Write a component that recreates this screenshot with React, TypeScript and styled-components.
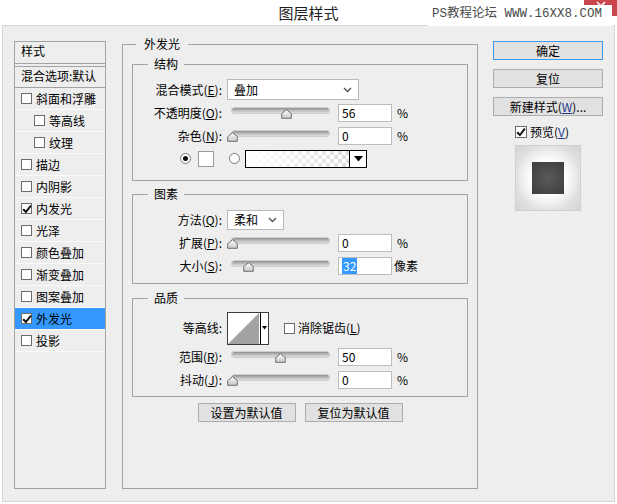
import React from 'react';
import styled, { createGlobalStyle } from 'styled-components';

const GlobalStyle = createGlobalStyle`
  html, body {
    margin: 0;
    padding: 0;
    background: #fff;
  }
  body {
    font-family: "Noto Sans CJK SC", "Microsoft YaHei", sans-serif;
    font-size: 12px;
    color: #000;
  }
  * {
    box-sizing: border-box;
  }
`;

type LayerItem = {
  label: string;
  checked?: boolean;
  indent?: boolean;
  selected?: boolean;
};

const layerStyles: LayerItem[] = [
  { label: '斜面和浮雕' },
  { label: '等高线', indent: true },
  { label: '纹理', indent: true },
  { label: '描边' },
  { label: '内阴影' },
  { label: '内发光', checked: true },
  { label: '光泽' },
  { label: '颜色叠加' },
  { label: '渐变叠加' },
  { label: '图案叠加' },
  { label: '外发光', checked: true, selected: true },
  { label: '投影' },
];

const Window = styled.div`
  position: relative;
  width: 617px;
  height: 504px;
  background: #fff;
  display: flex;
  flex-direction: column;
  overflow: hidden;
`;

const TitleBar = styled.div`
  height: 25px;
  flex-shrink: 0;
  display: flex;
  align-items: center;
  justify-content: center;
  font-size: 15px;
  line-height: 25px;
  color: #1e1e1e;
`;

const CloseButton = styled.div`
  position: absolute;
  top: 0;
  right: 0;
  width: 33px;
  height: 16px;
  background: #c9474c;
  display: flex;
  justify-content: center;
  padding-top: 1px;
`;

const Watermark = styled.div`
  position: absolute;
  top: 5px;
  left: 428px;
  width: 184px;
  height: 21px;
  background: #fff;
  padding-left: 4px;
  font-family: "Liberation Mono", "Noto Sans CJK SC", monospace;
  font-size: 12.5px;
  line-height: 19px;
  color: #4a4a4a;
  white-space: nowrap;
`;

const Body = styled.div`
  flex: 1;
  margin: 0 2px 2px 2px;
  border: 1px solid #d6d6d6;
  background: #eeeeee;
  display: flex;
  align-items: flex-start;
  padding: 11px 0 0 11px;
`;

/* left: list of effects */

const StyleList = styled.div`
  flex-shrink: 0;
  width: 92px;
  height: 448px;
  margin-top: 4px;
  border: 1px solid #a3a3a3;
`;

const ListHeader = styled.div`
  height: 22px;
  padding: 1px 0 0 6px;
  line-height: 16px;
  border-bottom: 1px solid #a3a3a3;
  margin-bottom: 2px;
`;

const BlendRow = styled.div`
  height: 22px;
  padding-left: 6px;
  line-height: 18px;
  border-top: 1px solid #a3a3a3;
  border-bottom: 1px solid #a3a3a3;
  white-space: nowrap;
  overflow: hidden;
`;

const ListRow = styled.div<{ $indent?: boolean; $selected?: boolean }>`
  height: 22px;
  display: flex;
  align-items: center;
  padding-left: ${({ $indent }) => ($indent ? '19px' : '6px')};
  background: ${({ $selected }) => ($selected ? '#3399ff' : 'transparent')};
  border-bottom: 1px solid #fafafa;
  white-space: nowrap;
`;

const RowText = styled.span`
  margin-left: 4px;
  line-height: 16px;
`;

const Box = styled.span<{ $size?: number }>`
  display: inline-flex;
  align-items: center;
  justify-content: center;
  flex-shrink: 0;
  width: ${({ $size }) => $size ?? 11}px;
  height: ${({ $size }) => $size ?? 11}px;
  border: 1px solid #6b6b6b;
  background: #fff;
  overflow: visible;
`;

const Checkbox: React.FC<{ checked?: boolean; size?: number }> = ({ checked, size }) => (
  <Box $size={size}>
    {checked && (
      <svg width="10" height="10" viewBox="0 0 10 10" style={{ overflow: 'visible' }}>
        <path d="M1.2 5.2 L3.9 8 L8.9 1.6" stroke="#111" strokeWidth="2" fill="none" />
      </svg>
    )}
  </Box>
);

/* center: outer glow group */

const MainGroup = styled.fieldset`
  flex-shrink: 0;
  width: 356px;
  height: 452px;
  margin: 0 0 0 16px;
  padding: 6px 9px 0;
  border: 1px solid #a3a3a3;
  min-inline-size: 0;
`;

const MainLegend = styled.legend`
  margin-left: 4px;
  padding: 0 8px;
  line-height: 14px;
  font-size: 12px;
`;

const SubGroup = styled.fieldset<{ $mt: number; $pt: number; $pb: number }>`
  margin: ${({ $mt }) => $mt}px 0 0;
  padding: ${({ $pt }) => $pt}px 0 ${({ $pb }) => $pb}px;
  border: 1px solid #a3a3a3;
  min-inline-size: 0;
`;

const SubLegend = styled.legend`
  margin-left: 15px;
  padding: 0 6px;
  line-height: 14px;
  font-size: 12px;
`;

const Row = styled.div<{ $h?: number }>`
  display: flex;
  align-items: center;
  height: ${({ $h }) => $h ?? 23}px;
`;

const Label = styled.div`
  width: 89px;
  margin-right: 5px;
  text-align: right;
  white-space: nowrap;
  line-height: 16px;
`;

const Mn = styled.u<{ $blue?: boolean }>`
  text-decoration: underline;
  text-underline-offset: 1px;
  color: ${({ $blue }) => ($blue ? '#23378f' : 'inherit')};
`;

const Select = styled.div<{ $w: number; $h: number }>`
  width: ${({ $w }) => $w}px;
  height: ${({ $h }) => $h}px;
  border: 1px solid #b9b9b9;
  background: #fff;
  display: flex;
  align-items: center;
  justify-content: space-between;
  padding: 0 6px 0 6px;
  line-height: 16px;
`;

const Chevron = () => (
  <svg width="9" height="6" viewBox="0 0 9 6">
    <path d="M1 1 L4.5 4.5 L8 1" stroke="#555" strokeWidth="1.4" fill="none" />
  </svg>
);

const SliderBox = styled.div`
  position: relative;
  width: 107px;
  height: 11px;
  margin-top: 1px;
`;

const Track = styled.div`
  margin-left: 5px;
  width: 97px;
  height: 5px;
  border-radius: 3px;
  background: linear-gradient(to bottom, #8f8f8f, #c4c4c4 60%, #dcdcdc);
  box-shadow: 0 0 0 1px rgba(150, 150, 150, 0.35);
`;

const Thumb = styled.svg`
  position: absolute;
  top: 1px;
`;

const Slider: React.FC<{ value: number }> = ({ value }) => (
  <SliderBox>
    <Track />
    <Thumb width="11" height="10" viewBox="0 0 11 10" style={{ left: value * 97 - 0.5 }}>
      <defs>
        <linearGradient id="thumbFill" x1="0" y1="0" x2="0" y2="1">
          <stop offset="0" stopColor="#ffffff" />
          <stop offset="1" stopColor="#c6c6c6" />
        </linearGradient>
      </defs>
      <path d="M5.5 0.7 L10.3 4.6 L10.3 9.3 L0.7 9.3 L0.7 4.6 Z" fill="url(#thumbFill)" stroke="#6f6f6f" strokeWidth="1" />
    </Thumb>
  </SliderBox>
);

const NumberBox = styled.div`
  width: 54px;
  height: 18px;
  margin-left: 4px;
  border: 1px solid #bdbdbd;
  background: #fff;
  padding-left: 3px;
  line-height: 16px;
  display: flex;
  align-items: center;
`;

const Highlight = styled.span`
  background: #3399ff;
  color: #fff;
  padding: 0 1px;
`;

const Unit = styled.span<{ $gap: number }>`
  margin-left: ${({ $gap }) => $gap}px;
  line-height: 16px;
`;

const ColorRow = styled.div`
  display: flex;
  align-items: center;
  height: 23px;
  padding-left: 47px;
`;

const Radio = styled.span<{ $on?: boolean }>`
  flex-shrink: 0;
  width: 11px;
  height: 11px;
  border-radius: 50%;
  border: 1px solid #7a7a7a;
  background: #fff;
  margin-right: ${({ $on }) => ($on ? '7px' : '5px')};
  display: flex;
  align-items: center;
  justify-content: center;

  &::after {
    content: '';
    width: 5px;
    height: 5px;
    border-radius: 50%;
    background: ${({ $on }) => ($on ? '#111' : 'transparent')};
  }
`;

const Swatch = styled.span`
  width: 16px;
  height: 16px;
  border: 1px solid #9a9a9a;
  background: #fff;
  margin-right: 15px;
`;

const GradientPicker = styled.div`
  width: 122px;
  height: 18px;
  border: 1px solid #000;
  display: flex;
`;

const GradientFill = styled.div`
  flex: 1;
  background:
    linear-gradient(to right, #fff 0%, rgba(255, 255, 255, 0) 100%),
    repeating-conic-gradient(#dcdcdc 0 25%, #fff 0 50%) 0 0 / 8px 8px;
`;

const DropPart = styled.div<{ $w: number }>`
  width: ${({ $w }) => $w}px;
  border-left: 1px solid #000;
  background: #fff;
  display: flex;
  align-items: center;
  justify-content: center;
`;

const DownTriangle: React.FC<{ w: number }> = ({ w }) => (
  <svg width={w} height={w / 2 + 1} viewBox={`0 0 ${w} ${w / 2 + 1}`}>
    <path d={`M0 0 L${w} 0 L${w / 2} ${w / 2 + 1} Z`} fill="#000" />
  </svg>
);

const ContourBox = styled.div`
  width: 42px;
  height: 33px;
  border: 1px solid #3c3c3c;
  display: flex;
  background: #fff;
`;

const ContourCurve = styled.div`
  flex: 1;
  display: flex;
`;

const AntiAlias = styled.label`
  display: flex;
  align-items: center;
  margin-left: 15px;
  line-height: 16px;
`;

const AntiAliasText = styled.span`
  margin-left: 3px;
`;

const DefaultButtons = styled.div`
  display: flex;
  justify-content: center;
  gap: 9px;
  margin-top: 6px;
`;

const Button = styled.button<{ $w: number; $primary?: boolean }>`
  width: ${({ $w }) => $w}px;
  height: 19px;
  padding: 0;
  border: 1px solid ${({ $primary }) => ($primary ? '#3d9bf2' : '#adadad')};
  background: #e1e1e1;
  font-family: inherit;
  font-size: 12px;
  line-height: 16px;
  color: #000;
  text-align: center;
`;

/* right column */

const ActionColumn = styled.div`
  flex-shrink: 0;
  width: 110px;
  margin: 4px 0 0 15px;
  display: flex;
  flex-direction: column;
  gap: 9px;
`;

const PreviewToggle = styled.label`
  display: flex;
  align-items: center;
  height: 13px;
  padding-left: 22px;
  line-height: 16px;
`;

const PreviewText = styled.span`
  margin-left: 3px;
`;

const PreviewBox = styled.div`
  width: 66px;
  height: 66px;
  margin: -2px 0 0 22px;
  border: 1px solid #d0d0d0;
  background: radial-gradient(circle at 50% 50%, #ffffff 16px, #f2f2f2 24px, #e0e0e0 33px, #d3d3d3 46px);
  display: flex;
  align-items: center;
  justify-content: center;
`;

const PreviewSquare = styled.div`
  width: 32px;
  height: 32px;
  background: radial-gradient(circle at 50% 50%, #5a5a5a, #454545 70%, #3e3e3e);
`;

export default function App() {
  return (
    <Window>
      <GlobalStyle />
      <TitleBar>图层样式</TitleBar>
      <CloseButton>
        <svg width="10" height="10" viewBox="0 0 10 10">
          <path d="M1 1 L9 9 M9 1 L1 9" stroke="#fff" strokeWidth="1.6" />
        </svg>
      </CloseButton>
      <Watermark>PS教程论坛 WWW.16XX8.COM</Watermark>

      <Body>
        <StyleList>
          <ListHeader>样式</ListHeader>
          <BlendRow>混合选项:默认</BlendRow>
          {layerStyles.map((item) => (
            <ListRow key={item.label} $indent={item.indent} $selected={item.selected}>
              <Checkbox checked={item.checked} />
              <RowText>{item.label}</RowText>
            </ListRow>
          ))}
        </StyleList>

        <MainGroup>
          <MainLegend>外发光</MainLegend>

          <SubGroup $mt={0} $pt={7} $pb={10}>
            <SubLegend>结构</SubLegend>
            <Row>
              <Label>
                混合模式(<Mn>E</Mn>):
              </Label>
              <Select $w={132} $h={21}>
                <span>叠加</span>
                <Chevron />
              </Select>
            </Row>
            <Row>
              <Label>
                不透明度(<Mn>O</Mn>):
              </Label>
              <Slider value={0.56} />
              <NumberBox>56</NumberBox>
              <Unit $gap={5}>%</Unit>
            </Row>
            <Row>
              <Label>
                杂色(<Mn>N</Mn>):
              </Label>
              <Slider value={0} />
              <NumberBox>0</NumberBox>
              <Unit $gap={5}>%</Unit>
            </Row>
            <ColorRow>
              <Radio $on />
              <Swatch />
              <Radio />
              <GradientPicker>
                <GradientFill />
                <DropPart $w={17}>
                  <DownTriangle w={9} />
                </DropPart>
              </GradientPicker>
            </ColorRow>
          </SubGroup>

          <SubGroup $mt={6} $pt={7} $pb={6}>
            <SubLegend>图素</SubLegend>
            <Row>
              <Label>
                方法(<Mn>Q</Mn>):
              </Label>
              <Select $w={57} $h={20}>
                <span>柔和</span>
                <Chevron />
              </Select>
            </Row>
            <Row>
              <Label>
                扩展(<Mn>P</Mn>):
              </Label>
              <Slider value={0} />
              <NumberBox>0</NumberBox>
              <Unit $gap={5}>%</Unit>
            </Row>
            <Row>
              <Label>
                大小(<Mn>S</Mn>):
              </Label>
              <Slider value={0.175} />
              <NumberBox>
                <Highlight>32</Highlight>
              </NumberBox>
              <Unit $gap={2}>像素</Unit>
            </Row>
          </SubGroup>

          <SubGroup $mt={7} $pt={6} $pb={5}>
            <SubLegend>品质</SubLegend>
            <Row $h={34}>
              <Label>等高线:</Label>
              <ContourBox>
                <ContourCurve>
                  <svg width="32" height="31" viewBox="0 0 32 31">
                    <path d="M0 31 L31 0 L31 31 Z" fill="#a3a3a3" />
                  </svg>
                </ContourCurve>
                <DropPart $w={9}>
                  <DownTriangle w={5} />
                </DropPart>
              </ContourBox>
              <AntiAlias>
                <Checkbox />
                <AntiAliasText>
                  消除锯齿(<Mn>L</Mn>)
                </AntiAliasText>
              </AntiAlias>
            </Row>
            <Row>
              <Label>
                范围(<Mn>R</Mn>):
              </Label>
              <Slider value={0.505} />
              <NumberBox>50</NumberBox>
              <Unit $gap={5}>%</Unit>
            </Row>
            <Row>
              <Label>
                抖动(<Mn>J</Mn>):
              </Label>
              <Slider value={0} />
              <NumberBox>0</NumberBox>
              <Unit $gap={5}>%</Unit>
            </Row>
          </SubGroup>

          <DefaultButtons>
            <Button $w={98}>设置为默认值</Button>
            <Button $w={98}>复位为默认值</Button>
          </DefaultButtons>
        </MainGroup>

        <ActionColumn>
          <Button $w={110} $primary>
            确定
          </Button>
          <Button $w={110}>复位</Button>
          <Button $w={110}>
            新建样式(<Mn $blue>W</Mn>)...
          </Button>
          <PreviewToggle>
            <Checkbox checked size={12} />
            <PreviewText>
              预览(<Mn $blue>V</Mn>)
            </PreviewText>
          </PreviewToggle>
          <PreviewBox>
            <PreviewSquare />
          </PreviewBox>
        </ActionColumn>
      </Body>
    </Window>
  );
}
